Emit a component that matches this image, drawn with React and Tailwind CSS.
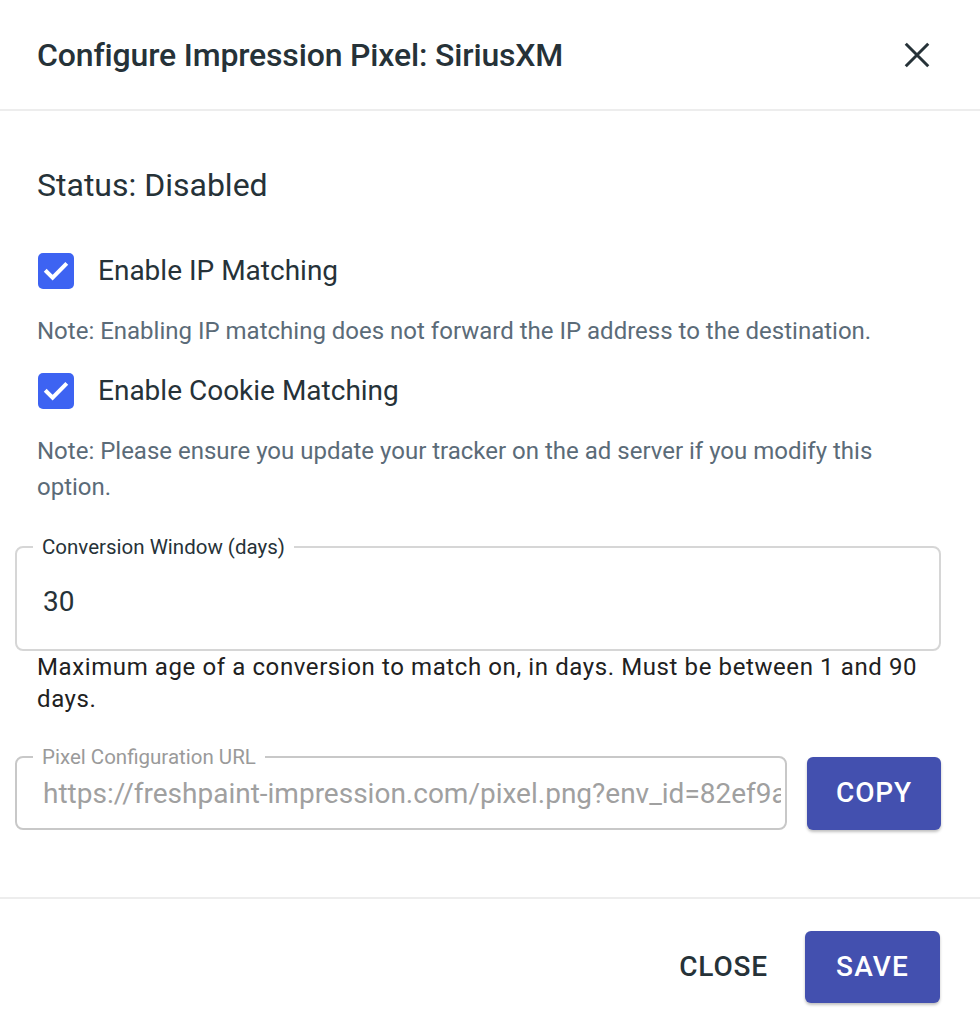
import { useState } from 'react';

function CheckRow({ label, checked, onToggle }) {
    return (
        <label className="flex items-center h-[36px] cursor-pointer">
            <span
                onClick={onToggle}
                className={`flex h-[36px] w-[36px] items-center justify-center rounded-[5px] ml-[1px] ${checked ? 'bg-[#3d63f2]' : 'border-2 border-gray-400'}`}
            >
                {checked && (
                    <svg className="h-[30px] w-[30px]" viewBox="0 0 24 24" fill="none" stroke="white" strokeWidth={3.2} strokeLinecap="square">
                        <path d="M4.5 12.5l4.8 4.8L19.5 7" />
                    </svg>
                )}
            </span>
            <span className="ml-[24px] text-[28px] text-[#263238]">{label}</span>
        </label>
    );
}

export default function App() {
    const [ip, setIp] = useState(true);
    const [cookie, setCookie] = useState(true);

    return (
        <div className="w-[980px] h-[1024px] bg-white font-['Roboto',sans-serif] flex flex-col">
            {/* Header */}
            <div className="h-[111px] flex items-center justify-between pl-[37px] pr-[48px] border-b-2 border-[#ededed]">
                <h2 className="text-[32px] font-medium text-[#263238] tracking-[-0.005em]">Configure Impression Pixel: SiriusXM</h2>
                <button className="text-[#263238]">
                    <svg className="h-[30px] w-[30px]" viewBox="0 0 24 24" fill="none" stroke="currentColor" strokeWidth={2.4}>
                        <path d="M3 3l18 18M21 3L3 21" />
                    </svg>
                </button>
            </div>

            {/* Body */}
            <div className="flex-1 px-[37px] pt-[56px]">
                <p className="text-[32px] text-[#263238] leading-[36px]">Status: Disabled</p>

                <div className="mt-[50px]">
                    <CheckRow label="Enable IP Matching" checked={ip} onToggle={() => setIp(!ip)} />
                </div>
                <p className="mt-[24px] text-[24px] text-[#5b6b78] leading-[36px]">
                    Note: Enabling IP matching does not forward the IP address to the destination.
                </p>
                <div className="mt-[24px]">
                    <CheckRow label="Enable Cookie Matching" checked={cookie} onToggle={() => setCookie(!cookie)} />
                </div>
                <p className="mt-[24px] text-[24px] text-[#5b6b78] leading-[36px]">
                    Note: Please ensure you update your tracker on the ad server if you modify this option.
                </p>

                {/* Conversion window */}
                <div className="relative mt-[41px] -ml-[22px] w-[926px] h-[105px] rounded-[8px] border-2 border-[#d6d6d6]">
                    <span className="absolute -top-[16px] left-[16px] bg-white px-[9px] text-[20.5px] text-[#263238]">Conversion Window (days)</span>
                    <div className="pl-[26px] pt-[33px] text-[28px] text-[#263238]">30</div>
                </div>
                <p className="text-[24px] text-[#212121] leading-[32px] tracking-[0.025em]">
                    Maximum age of a conversion to match on, in days. Must be between 1 and 90 days.
                </p>

                {/* Pixel URL */}
                <div className="mt-[41px] -ml-[22px] flex items-center gap-[20px]">
                    <div className="relative w-[772px] h-[74px] rounded-[8px] border-2 border-[#c8c8c8]">
                        <span className="absolute -top-[16px] left-[16px] bg-white px-[9px] text-[20.5px] text-[#9a9a9a]">Pixel Configuration URL</span>
                        <input
                            readOnly
                            value="https://freshpaint-impression.com/pixel.png?env_id=82ef9a1c7"
                            className="w-full h-full bg-transparent pl-[26px] pr-[4px] text-[28px] text-[#a0a0a0] outline-none"
                        />
                    </div>
                    <button className="w-[134px] h-[73px] rounded-[6px] bg-[#4350af] text-white text-[28px] font-medium tracking-[0.03em] shadow-[0_2px_3px_rgba(0,0,0,0.25)]">
                        COPY
                    </button>
                </div>
            </div>

            {/* Footer */}
            <div className="h-[127px] border-t-2 border-[#ededed] flex items-start justify-end pt-[32px] pr-[40px] gap-[37px]">
                <button className="h-[72px] text-[28px] font-medium text-[#263238] tracking-[0.03em]">CLOSE</button>
                <button className="w-[135px] h-[72px] rounded-[6px] bg-[#4350af] text-white text-[28px] font-medium tracking-[0.04em] shadow-[0_2px_3px_rgba(0,0,0,0.25)]">
                    SAVE
                </button>
            </div>
        </div>
    );
}
